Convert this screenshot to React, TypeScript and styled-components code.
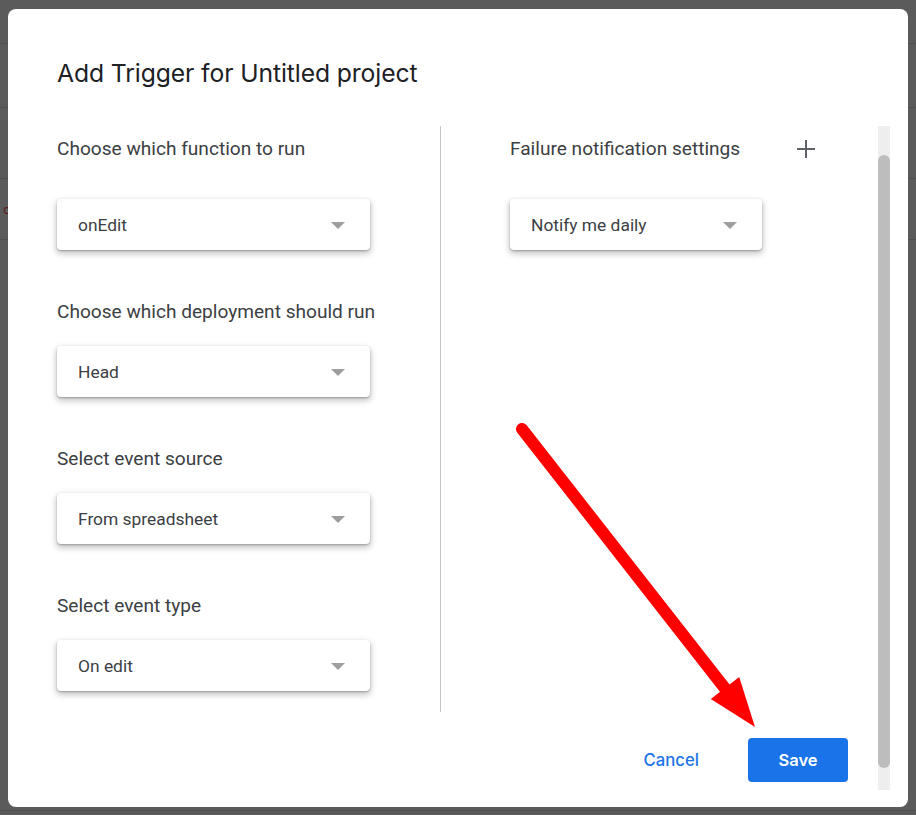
import React from "react";
import styled, { createGlobalStyle } from "styled-components";

const Global = createGlobalStyle`
  html, body { margin: 0; padding: 0; }
  body {
    background: #5b5b5b;
    font-family: Roboto, "Liberation Sans", Arial, sans-serif;
    overflow: hidden;
  }
`;

const Page = styled.div`
  width: 916px;
  height: 815px;
  display: flex;
  flex-direction: column;
  background: #5b5b5b;
`;

const PageRow = styled.div<{ $h: number }>`
  height: ${(p) => p.$h}px;
  flex: none;
  border-bottom: 1px solid #4f4f4f;
  display: flex;
  align-items: center;
  font-size: 13px;
  color: #5a1c1c;
  font-family: Roboto, sans-serif;
`;

const Overlay = styled.div`
  position: fixed;
  inset: 0;
  padding: 9px 8px 8px 8px;
  display: flex;
`;

const Dialog = styled.div`
  flex: 1;
  background: #ffffff;
  border-radius: 8px;
  display: flex;
  flex-direction: column;
  padding: 49px 18px 17px 49px;
  box-sizing: border-box;
`;

const Title = styled.h1`
  margin: 0 0 38px 0;
  font-family: Inter, "Open Sans", sans-serif;
  font-weight: 400;
  font-size: 24.7px;
  line-height: 30px;
  color: #202124;
  letter-spacing: -0.1px;
`;

const Main = styled.div`
  flex: 1;
  display: flex;
  min-height: 0;
`;

const Content = styled.div`
  flex: 1;
  display: flex;
  flex-direction: column;
`;

const Columns = styled.div`
  height: 586px;
  display: flex;
`;

const LeftColumn = styled.div`
  width: 383px;
  padding-top: 3px;
  display: flex;
  flex-direction: column;
`;

const Divider = styled.div`
  width: 1px;
  background: #c4c4c4;
  align-self: stretch;
`;

const RightColumn = styled.div`
  flex: 1;
  padding: 3px 52px 0 69px;
  display: flex;
  flex-direction: column;
`;

const Section = styled.div<{ $first?: boolean }>`
  display: flex;
  flex-direction: column;
  margin-top: ${(p) => (p.$first ? 0 : 50)}px;
`;

const HeaderRow = styled.div`
  height: 40px;
  display: flex;
  align-items: center;
  justify-content: space-between;
  margin-bottom: 30px;
`;

const Label = styled.div<{ $first?: boolean }>`
  font-size: 19.1px;
  line-height: 24px;
  color: #3c4043;
  margin-bottom: ${(p) => (p.$first ? 0 : 22)}px;
`;

const SelectBox = styled.div<{ $w: number }>`
  width: ${(p) => p.$w}px;
  height: 51px;
  box-sizing: border-box;
  background: #fff;
  border-radius: 4px;
  box-shadow: 0 1px 2px rgba(0, 0, 0, 0.25), 0 3px 6px 1px rgba(0, 0, 0, 0.22);
  display: flex;
  align-items: center;
  justify-content: space-between;
  padding: 0 25px 0 21px;
  font-size: 17.4px;
  color: #3c4043;
`;

const Caret = styled.span`
  width: 0;
  height: 0;
  border-left: 7.5px solid transparent;
  border-right: 7.5px solid transparent;
  border-top: 7px solid #9e9e9e;
  margin-top: 1px;
`;

const IconButton = styled.button`
  width: 40px;
  height: 40px;
  border: none;
  background: transparent;
  padding: 0;
  display: flex;
  align-items: center;
  justify-content: center;
  cursor: pointer;
`;

const Footer = styled.div`
  display: flex;
  justify-content: flex-end;
  align-items: center;
  padding: 26px 30px 0 0;
  gap: 25px;
`;

const TextButton = styled.button`
  height: 44px;
  padding: 0 24px;
  border: none;
  background: transparent;
  color: #1a73e8;
  font-family: Inter, "Open Sans", sans-serif;
  font-size: 16.7px;
  font-weight: 500;
  cursor: pointer;
`;

const PrimaryButton = styled.button`
  width: 100px;
  height: 44px;
  border: none;
  border-radius: 4px;
  background: #1a73e8;
  color: #fff;
  font-family: Inter, "Open Sans", sans-serif;
  font-size: 16.5px;
  font-weight: 600;
  cursor: pointer;
`;

const Track = styled.div`
  width: 12px;
  background: #eeeeee;
  display: flex;
  flex-direction: column;
`;

const Thumb = styled.div`
  margin-top: 29px;
  height: 613px;
  border-radius: 6px;
  background: #bdbdbd;
`;

const Annotation = styled.svg`
  position: fixed;
  left: 0;
  top: 0;
  width: 916px;
  height: 815px;
  pointer-events: none;
`;

const Select = ({ value, width }: { value: string; width: number }) => (
  <SelectBox $w={width}>
    <span>{value}</span>
    <Caret />
  </SelectBox>
);

const fields = [
  { label: "Choose which deployment should run", value: "Head" },
  { label: "Select event source", value: "From spreadsheet" },
  { label: "Select event type", value: "On edit" },
];

export default function App() {
  return (
    <>
      <Global />
      <Page>
        <PageRow $h={43} />
        <PageRow $h={63} />
        <PageRow $h={70} />
        <PageRow $h={60}>&nbsp;c r</PageRow>
        <PageRow $h={570} />
      </Page>
      <Overlay>
        <Dialog>
          <Title>Add Trigger for Untitled project</Title>
          <Main>
            <Content>
              <Columns>
                <LeftColumn>
                  <Section $first>
                    <HeaderRow>
                      <Label $first>Choose which function to run</Label>
                    </HeaderRow>
                    <Select value="onEdit" width={313} />
                  </Section>
                  {fields.map((f) => (
                    <Section key={f.label}>
                      <Label>{f.label}</Label>
                      <Select value={f.value} width={313} />
                    </Section>
                  ))}
                </LeftColumn>
                <Divider />
                <RightColumn>
                  <Section $first>
                    <HeaderRow>
                      <Label $first>Failure notification settings</Label>
                      <IconButton aria-label="Add">
                        <svg width="20" height="20" viewBox="0 0 20 20">
                          <path d="M10 1v18M1 10h18" stroke="#5f6368" strokeWidth="2" fill="none" />
                        </svg>
                      </IconButton>
                    </HeaderRow>
                    <Select value="Notify me daily" width={252} />
                  </Section>
                </RightColumn>
              </Columns>
              <Footer>
                <TextButton>Cancel</TextButton>
                <PrimaryButton>Save</PrimaryButton>
              </Footer>
            </Content>
            <Track>
              <Thumb />
            </Track>
          </Main>
        </Dialog>
      </Overlay>
      <Annotation viewBox="0 0 916 815">
        <line x1="522" y1="429" x2="727" y2="691" stroke="#ff0000" strokeWidth="12" strokeLinecap="round" />
        <polygon points="755,727 710.8,699.1 739.2,676.9" fill="#ff0000" />
      </Annotation>
    </>
  );
}
